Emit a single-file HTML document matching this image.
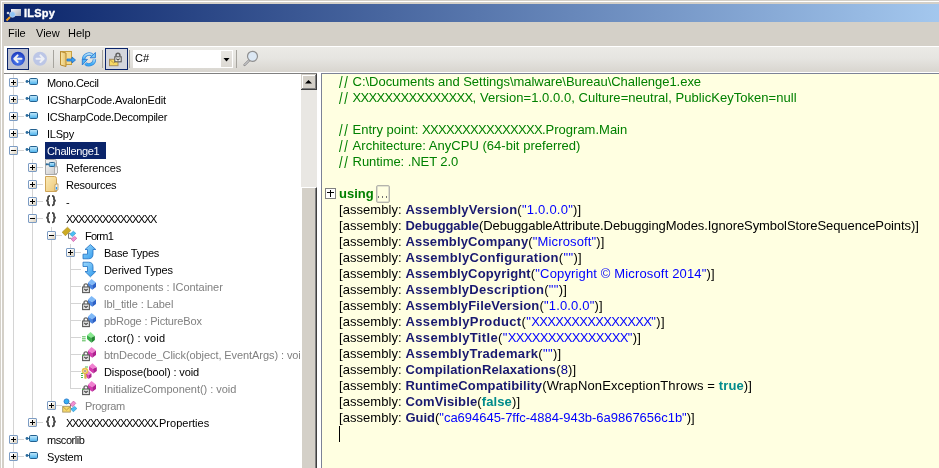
<!DOCTYPE html><html><head><meta charset="utf-8"><style>
*{margin:0;padding:0;box-sizing:border-box}
html,body{width:939px;height:468px;overflow:hidden;background:#D4D0C8;font-family:"Liberation Sans",sans-serif}
.a{position:absolute}
.t{will-change:transform;position:absolute;white-space:pre;line-height:17px;font-size:11px}
.c{will-change:transform;position:absolute;white-space:pre;line-height:16px;font-size:13px;left:339px;color:#000}
.g{color:#008000}
.k{color:#008000;font-weight:bold}
.n{color:#191970;font-weight:bold}
.s{color:#0000FF}
.v{color:#008B8B;font-weight:bold}
.d{color:#00008B}
.x{letter-spacing:-0.67px}
.x2{letter-spacing:-1.34px}
.sep{position:absolute;width:1px;background:#A6A49E}
</style></head><body><div class="a" style="left:1px;top:1px;width:938px;height:467px;border-left:1px solid #fff;border-top:1px solid #fff"></div>
<div class="a" style="left:4px;top:4px;width:935px;height:18px;background:linear-gradient(90deg,#0A246A 0px,#A6CAF0 951px)"></div>
<svg class="a" style="left:5px;top:5px" width="17" height="17" viewBox="0 0 17 17">
<defs><linearGradient id="tg" x1="0" y1="0" x2="1" y2="1"><stop offset="0" stop-color="#f4f4f6"/><stop offset="1" stop-color="#a8aeb8"/></linearGradient></defs>
<rect x="6" y="4" width="10" height="7" fill="url(#tg)"/>
<circle cx="3" cy="8" r="1.3" fill="#d0d4dc"/>
<circle cx="7.5" cy="9.5" r="2.8" fill="#8cc4f4" stroke="#c4d4ec" stroke-width="0.8"/>
<path d="M1.5 15.5 L5 12" stroke="#f0a020" stroke-width="2"/>
</svg>
<div class="t" style="left:24px;top:4px;line-height:18px;font-weight:bold;color:#fff;-webkit-text-stroke:0.35px #fff;letter-spacing:0.25px">ILSpy</div>
<div class="t" style="left:8px;top:25px;color:#000">File</div>
<div class="t" style="left:36px;top:25px;color:#000">View</div>
<div class="t" style="left:68px;top:25px;color:#000">Help</div>
<div class="a" style="left:4px;top:46px;width:935px;height:26px;border-top:1px solid #fff;border-left:1px solid #fff;background:linear-gradient(#EBEAE6 0%,#E6E5E1 45%,#D8D5CF 100%)"></div>
<div class="a" style="left:4px;top:72px;width:935px;height:1px;background:#fff"></div>
<div class="a" style="left:4px;top:46px;width:3px;height:27px;background:#fff"></div>
<div class="a" style="left:4px;top:46px;width:26px;height:2px;background:#fff"></div>
<div class="a" style="left:4px;top:70px;width:26px;height:2px;background:linear-gradient(90deg,#fff,#F4F2EA 80%,#E2DFD8)"></div>
<div class="a" style="left:7px;top:48px;width:22px;height:22px;border:1px solid #0A246A;background:#B9BED0"></div>
<div class="a" style="left:105px;top:48px;width:23px;height:22px;border:1px solid #0A246A;background:#D3D5DC"></div>
<svg class="a" style="left:10px;top:51px" width="16" height="16" viewBox="0 0 16 16">
<defs><radialGradient id="bk" cx="0.5" cy="0.65" r="0.6"><stop offset="0" stop-color="#5A8CF8"/><stop offset="1" stop-color="#1D3CC0"/></radialGradient></defs>
<circle cx="8" cy="7.7" r="7" fill="url(#bk)"/>
<path d="M4.3 7.7 L7.6 4.4 M4.3 7.7 L7.6 11 M4.6 7.7 L11.5 7.7" stroke="#F2F2F2" stroke-width="2" stroke-linecap="round" fill="none"/>
</svg>
<svg class="a" style="left:32px;top:51px" width="16" height="16" viewBox="0 0 16 16">
<circle cx="8" cy="7.7" r="7" fill="#BCC6E6"/>
<path d="M11.7 7.7 L8.4 4.4 M11.7 7.7 L8.4 11 M11.4 7.7 L4.5 7.7" stroke="#EEF0F6" stroke-width="2" stroke-linecap="round" fill="none"/>
</svg>
<div class="sep" style="left:53px;top:50px;height:18px"></div>
<svg class="a" style="left:59px;top:50px" width="18" height="18" viewBox="0 0 18 18">
<defs><linearGradient id="fo" x1="0" y1="0" x2="1" y2="0"><stop offset="0" stop-color="#F8E6A8"/><stop offset="1" stop-color="#E8C46C"/></linearGradient></defs>
<rect x="1.5" y="1.5" width="11" height="13" fill="#F4DA90" stroke="#C8A040" stroke-width="1"/>
<path d="M1.5 1.5 L7 3 L7 16.5 L1.5 15 Z" fill="url(#fo)" stroke="#B88A30" stroke-width="1"/>
<path d="M8 9 L13 9 L13 7 L16.5 10 L13 13 L13 11 L8 11 Z" fill="#3AA0F0" stroke="#1C6CC8" stroke-width="0.8"/>
</svg>
<svg class="a" style="left:81px;top:51px" width="16" height="16" viewBox="0 0 16 16">
<defs><linearGradient id="rf" x1="0" y1="0" x2="0" y2="1"><stop offset="0" stop-color="#B4E0FA"/><stop offset="1" stop-color="#30A8F6"/></linearGradient></defs>
<path d="M2.6 8.6 A5.4 5.4 0 0 1 11.8 4.6" stroke="#3C8CDC" stroke-width="3.4" fill="none"/>
<path d="M13.4 8.2 A5.4 5.4 0 0 1 4.4 12.4" stroke="#3C8CDC" stroke-width="3.4" fill="none"/>
<path d="M2.6 8.6 A5.4 5.4 0 0 1 11.8 4.6" stroke="url(#rf)" stroke-width="1.8" fill="none"/>
<path d="M13.4 8.2 A5.4 5.4 0 0 1 4.4 12.4" stroke="url(#rf)" stroke-width="1.8" fill="none"/>
<path d="M14.4 1.5 L14.4 6.8 L9.1 6.8 Z" fill="#7ACAF8" stroke="#2A78D0" stroke-width="0.9" stroke-linejoin="round"/>
<path d="M1.3 8.4 L6.5 8.4 L1.3 14 Z" fill="#50B4F6" stroke="#2A78D0" stroke-width="0.9" stroke-linejoin="round"/>
</svg>
<div class="sep" style="left:102px;top:50px;height:18px"></div>
<svg class="a" style="left:108px;top:51px" width="16" height="16" viewBox="0 0 16 16">
<rect x="1.5" y="8.3" width="8.5" height="6.4" fill="#F6D865" stroke="#A89060" stroke-width="1"/>
<path d="M1.8 8.6 L5.7 12 L9.7 8.6" stroke="#B89440" stroke-width="0.9" fill="none"/>
<path d="M8 5.5 L8 4.2 A1.95 1.95 0 0 1 11.9 4.2 L11.9 5.5" stroke="#606060" stroke-width="1.5" fill="none"/>
<rect x="6.8" y="5.8" width="6.4" height="5" fill="#EEEEEE" stroke="#585858" stroke-width="1.1"/>
<path d="M8.3 7.6 L10 9 L11.7 7.6" stroke="#505050" stroke-width="1.2" fill="none"/>
</svg>
<div class="sep" style="left:129px;top:50px;height:18px"></div>
<div class="a" style="left:133px;top:50px;width:100px;height:18px;background:#fff"></div>
<div class="a" style="left:221px;top:51px;width:11px;height:16px;background:linear-gradient(#E8E6E2,#DCD9D3)"></div>
<svg class="a" style="left:223px;top:58px" width="7" height="4" viewBox="0 0 7 4"><path d="M0.5 0 L6.5 0 L3.5 3.5 Z" fill="#000"/></svg>
<div class="t" style="left:135px;top:50px;color:#000">C#</div>
<div class="sep" style="left:236px;top:50px;height:18px"></div>
<svg class="a" style="left:242px;top:50px" width="17" height="17" viewBox="0 0 17 17">
<path d="M2.5 15 L7.5 10" stroke="#888" stroke-width="2.4" stroke-linecap="round"/>
<path d="M2.5 15 L7.5 10" stroke="#e8e8ee" stroke-width="1" stroke-linecap="round"/>
<circle cx="10.5" cy="6.3" r="5" fill="#DCE8F4" stroke="#909090" stroke-width="1.2"/>
</svg>
<div class="a" style="left:4px;top:73px;width:313px;height:1px;background:#808080"></div>
<div class="a" style="left:4px;top:74px;width:297px;height:394px;background:#fff;overflow:hidden">
<svg width="0" height="0" style="position:absolute"><defs>
<linearGradient id="ga" x1="0" y1="0" x2="0" y2="1"><stop offset="0" stop-color="#C8ECFC"/><stop offset="1" stop-color="#48B0EC"/></linearGradient>
<linearGradient id="gg" x1="0" y1="0" x2="1" y2="1"><stop offset="0" stop-color="#F8F8F8"/><stop offset="1" stop-color="#C8C8C8"/></linearGradient>
<linearGradient id="gf" x1="0" y1="0" x2="1" y2="1"><stop offset="0" stop-color="#FBEBB8"/><stop offset="1" stop-color="#EDC878"/></linearGradient>
<linearGradient id="gb" x1="0" y1="0" x2="1" y2="1"><stop offset="0" stop-color="#9CD8FC"/><stop offset="1" stop-color="#2C98EC"/></linearGradient>
</defs></svg>
<div class="a" style="left:9px;top:0px;width:1px;height:394px;background:#D4D4D4"></div>
<div class="a" style="left:28px;top:85px;width:1px;height:264px;background:#D4D4D4"></div>
<div class="a" style="left:47px;top:153px;width:1px;height:179px;background:#D4D4D4"></div>
<div class="a" style="left:66px;top:170px;width:1px;height:145px;background:#D4D4D4"></div>
<div class="a" style="left:14px;top:8px;width:6px;height:1px;background:#D4D4D4"></div>
<div class="a" style="left:14px;top:25px;width:6px;height:1px;background:#D4D4D4"></div>
<div class="a" style="left:14px;top:42px;width:6px;height:1px;background:#D4D4D4"></div>
<div class="a" style="left:14px;top:59px;width:6px;height:1px;background:#D4D4D4"></div>
<div class="a" style="left:14px;top:76px;width:6px;height:1px;background:#D4D4D4"></div>
<div class="a" style="left:33px;top:93px;width:6px;height:1px;background:#D4D4D4"></div>
<div class="a" style="left:33px;top:110px;width:6px;height:1px;background:#D4D4D4"></div>
<div class="a" style="left:33px;top:127px;width:6px;height:1px;background:#D4D4D4"></div>
<div class="a" style="left:33px;top:144px;width:6px;height:1px;background:#D4D4D4"></div>
<div class="a" style="left:52px;top:161px;width:6px;height:1px;background:#D4D4D4"></div>
<div class="a" style="left:71px;top:178px;width:6px;height:1px;background:#D4D4D4"></div>
<div class="a" style="left:66px;top:195px;width:11px;height:1px;background:#D4D4D4"></div>
<div class="a" style="left:66px;top:212px;width:11px;height:1px;background:#D4D4D4"></div>
<div class="a" style="left:66px;top:229px;width:11px;height:1px;background:#D4D4D4"></div>
<div class="a" style="left:66px;top:246px;width:11px;height:1px;background:#D4D4D4"></div>
<div class="a" style="left:66px;top:263px;width:11px;height:1px;background:#D4D4D4"></div>
<div class="a" style="left:66px;top:280px;width:11px;height:1px;background:#D4D4D4"></div>
<div class="a" style="left:66px;top:297px;width:11px;height:1px;background:#D4D4D4"></div>
<div class="a" style="left:66px;top:314px;width:11px;height:1px;background:#D4D4D4"></div>
<div class="a" style="left:52px;top:331px;width:6px;height:1px;background:#D4D4D4"></div>
<div class="a" style="left:33px;top:348px;width:6px;height:1px;background:#D4D4D4"></div>
<div class="a" style="left:14px;top:365px;width:6px;height:1px;background:#D4D4D4"></div>
<div class="a" style="left:14px;top:382px;width:6px;height:1px;background:#D4D4D4"></div>
<div class="a" style="left:5px;top:4px;width:9px;height:9px;border:1px solid #7C9CC4;border-radius:1px;background:linear-gradient(135deg,#FFFFFF 20%,#D8CFBC)"></div>
<div class="a" style="left:7px;top:8px;width:5px;height:1px;background:#000"></div>
<div class="a" style="left:9px;top:6px;width:1px;height:5px;background:#000"></div>
<svg class="a" style="left:21px;top:0px;overflow:visible" width="16" height="17" viewBox="0 0 16 17"><circle cx="2" cy="7.5" r="1.4" fill="#2A6A9C"/><path d="M2 7.5 L4 7.5" stroke="#2A6A9C" stroke-width="1"/>
<rect x="4.5" y="4.5" width="8" height="6" rx="1.2" fill="url(#ga)" stroke="#23608F" stroke-width="1"/></svg>
<div class="t" style="left:43px;top:1px;color:#000;letter-spacing:-0.333px">Mono.Cecil</div>
<div class="a" style="left:5px;top:21px;width:9px;height:9px;border:1px solid #7C9CC4;border-radius:1px;background:linear-gradient(135deg,#FFFFFF 20%,#D8CFBC)"></div>
<div class="a" style="left:7px;top:25px;width:5px;height:1px;background:#000"></div>
<div class="a" style="left:9px;top:23px;width:1px;height:5px;background:#000"></div>
<svg class="a" style="left:21px;top:17px;overflow:visible" width="16" height="17" viewBox="0 0 16 17"><circle cx="2" cy="7.5" r="1.4" fill="#2A6A9C"/><path d="M2 7.5 L4 7.5" stroke="#2A6A9C" stroke-width="1"/>
<rect x="4.5" y="4.5" width="8" height="6" rx="1.2" fill="url(#ga)" stroke="#23608F" stroke-width="1"/></svg>
<div class="t" style="left:43px;top:18px;color:#000;letter-spacing:-0.143px">ICSharpCode.AvalonEdit</div>
<div class="a" style="left:5px;top:38px;width:9px;height:9px;border:1px solid #7C9CC4;border-radius:1px;background:linear-gradient(135deg,#FFFFFF 20%,#D8CFBC)"></div>
<div class="a" style="left:7px;top:42px;width:5px;height:1px;background:#000"></div>
<div class="a" style="left:9px;top:40px;width:1px;height:5px;background:#000"></div>
<svg class="a" style="left:21px;top:34px;overflow:visible" width="16" height="17" viewBox="0 0 16 17"><circle cx="2" cy="7.5" r="1.4" fill="#2A6A9C"/><path d="M2 7.5 L4 7.5" stroke="#2A6A9C" stroke-width="1"/>
<rect x="4.5" y="4.5" width="8" height="6" rx="1.2" fill="url(#ga)" stroke="#23608F" stroke-width="1"/></svg>
<div class="t" style="left:43px;top:35px;color:#000;letter-spacing:-0.238px">ICSharpCode.Decompiler</div>
<div class="a" style="left:5px;top:55px;width:9px;height:9px;border:1px solid #7C9CC4;border-radius:1px;background:linear-gradient(135deg,#FFFFFF 20%,#D8CFBC)"></div>
<div class="a" style="left:7px;top:59px;width:5px;height:1px;background:#000"></div>
<div class="a" style="left:9px;top:57px;width:1px;height:5px;background:#000"></div>
<svg class="a" style="left:21px;top:51px;overflow:visible" width="16" height="17" viewBox="0 0 16 17"><circle cx="2" cy="7.5" r="1.4" fill="#2A6A9C"/><path d="M2 7.5 L4 7.5" stroke="#2A6A9C" stroke-width="1"/>
<rect x="4.5" y="4.5" width="8" height="6" rx="1.2" fill="url(#ga)" stroke="#23608F" stroke-width="1"/></svg>
<div class="t" style="left:43px;top:52px;color:#000;letter-spacing:-0.25px">ILSpy</div>
<div class="a" style="left:5px;top:72px;width:9px;height:9px;border:1px solid #7C9CC4;border-radius:1px;background:linear-gradient(135deg,#FFFFFF 20%,#D8CFBC)"></div>
<div class="a" style="left:7px;top:76px;width:5px;height:1px;background:#000"></div>
<svg class="a" style="left:21px;top:68px;overflow:visible" width="16" height="17" viewBox="0 0 16 17"><circle cx="2" cy="7.5" r="1.4" fill="#2A6A9C"/><path d="M2 7.5 L4 7.5" stroke="#2A6A9C" stroke-width="1"/>
<rect x="4.5" y="4.5" width="8" height="6" rx="1.2" fill="url(#ga)" stroke="#23608F" stroke-width="1"/></svg>
<div class="a" style="left:41px;top:68px;width:61px;height:17px;background:#0A246A"></div>
<div class="t" style="left:43px;top:69px;color:#fff;letter-spacing:-0.333px">Challenge1</div>
<div class="a" style="left:24px;top:89px;width:9px;height:9px;border:1px solid #7C9CC4;border-radius:1px;background:linear-gradient(135deg,#FFFFFF 20%,#D8CFBC)"></div>
<div class="a" style="left:26px;top:93px;width:5px;height:1px;background:#000"></div>
<div class="a" style="left:28px;top:91px;width:1px;height:5px;background:#000"></div>
<svg class="a" style="left:40px;top:85px;overflow:visible" width="16" height="17" viewBox="0 0 16 17"><path d="M1.5 0.5 L10.5 0.5 Q12.5 0.5 12.5 2.5 L12.5 15.5 L1.5 15.5 Z" fill="url(#gg)" stroke="#A8A8A8" stroke-width="1"/>
<path d="M10.5 8 L13.5 7.5 L13.5 14 L10.5 15.5 Z" fill="#F0F0F0" stroke="#A0A0A0" stroke-width="0.8"/>
<circle cx="2.8" cy="5.3" r="1.1" fill="#2A6A9C"/><path d="M2.8 5.3 L5 5.3" stroke="#2A6A9C"/>
<rect x="5.2" y="3.5" width="5.6" height="4" rx="1" fill="url(#ga)" stroke="#23608F" stroke-width="1"/></svg>
<div class="t" style="left:62px;top:86px;color:#000;letter-spacing:-0.111px">References</div>
<div class="a" style="left:24px;top:106px;width:9px;height:9px;border:1px solid #7C9CC4;border-radius:1px;background:linear-gradient(135deg,#FFFFFF 20%,#D8CFBC)"></div>
<div class="a" style="left:26px;top:110px;width:5px;height:1px;background:#000"></div>
<div class="a" style="left:28px;top:108px;width:1px;height:5px;background:#000"></div>
<svg class="a" style="left:40px;top:102px;overflow:visible" width="16" height="17" viewBox="0 0 16 17"><path d="M1.5 0.5 L10.5 0.5 Q12.5 0.5 12.5 2.5 L12.5 15.5 L1.5 15.5 Z" fill="url(#gf)" stroke="#CFA557" stroke-width="1"/>
<path d="M11 8.5 L14 7.8 L14 14 L11 15 Z" fill="#F4F4F4" stroke="#B89858" stroke-width="0.8"/><path d="M12.5 11 L12.5 13.5" stroke="#2898F0" stroke-width="1.3"/></svg>
<div class="t" style="left:62px;top:103px;color:#000;letter-spacing:-0.25px">Resources</div>
<div class="a" style="left:24px;top:123px;width:9px;height:9px;border:1px solid #7C9CC4;border-radius:1px;background:linear-gradient(135deg,#FFFFFF 20%,#D8CFBC)"></div>
<div class="a" style="left:26px;top:127px;width:5px;height:1px;background:#000"></div>
<div class="a" style="left:28px;top:125px;width:1px;height:5px;background:#000"></div>
<svg class="a" style="left:40px;top:119px;overflow:visible" width="16" height="17" viewBox="0 0 16 17"><path d="M6 2.8 Q4 2.8 4 4.8 L4 6.5 Q4 7.5 2.2 7.6 Q4 7.7 4 8.7 L4 10.5 Q4 12.4 6 12.4 M8 2.8 Q10 2.8 10 4.8 L10 6.5 Q10 7.5 11.8 7.6 Q10 7.7 10 8.7 L10 10.5 Q10 12.4 8 12.4" stroke="#444" stroke-width="1.8" fill="none"/></svg>
<div class="t" style="left:62px;top:120px;color:#000;letter-spacing:0px">-</div>
<div class="a" style="left:24px;top:140px;width:9px;height:9px;border:1px solid #7C9CC4;border-radius:1px;background:linear-gradient(135deg,#FFFFFF 20%,#D8CFBC)"></div>
<div class="a" style="left:26px;top:144px;width:5px;height:1px;background:#000"></div>
<svg class="a" style="left:40px;top:136px;overflow:visible" width="16" height="17" viewBox="0 0 16 17"><path d="M6 2.8 Q4 2.8 4 4.8 L4 6.5 Q4 7.5 2.2 7.6 Q4 7.7 4 8.7 L4 10.5 Q4 12.4 6 12.4 M8 2.8 Q10 2.8 10 4.8 L10 6.5 Q10 7.5 11.8 7.6 Q10 7.7 10 8.7 L10 10.5 Q10 12.4 8 12.4" stroke="#444" stroke-width="1.8" fill="none"/></svg>
<div class="t" style="left:62px;top:137px;color:#000;letter-spacing:0px"><span class="x2">XXXXXXXXXXXXXXX</span></div>
<div class="a" style="left:43px;top:157px;width:9px;height:9px;border:1px solid #7C9CC4;border-radius:1px;background:linear-gradient(135deg,#FFFFFF 20%,#D8CFBC)"></div>
<div class="a" style="left:45px;top:161px;width:5px;height:1px;background:#000"></div>
<svg class="a" style="left:59px;top:153px;overflow:visible" width="16" height="17" viewBox="0 0 16 17"><path d="M4.5 0.2 L7.8 3.4 L2.4 8.8 L-0.8 5.2 Z" fill="#CDAA22" stroke="#A08418" stroke-width="0.6"/>
<path d="M5.5 6.3 L5.5 11.3 L8.5 11.3 M5.5 6.3 L7.5 6.3" stroke="#7A7A7A" stroke-width="1" fill="none"/>
<path d="M10.3 4.2 L12.8 6.3 L9.2 9.6 L7 7.3 Z" fill="#48C0F4" stroke="#1E88C8" stroke-width="0.6"/>
<path d="M11.5 9.2 L13.8 11.3 L10.3 14.6 L8.2 12.1 Z" fill="#F090D0" stroke="#C04898" stroke-width="0.6"/></svg>
<div class="t" style="left:81px;top:154px;color:#000;letter-spacing:-0.75px">Form1</div>
<div class="a" style="left:62px;top:174px;width:9px;height:9px;border:1px solid #7C9CC4;border-radius:1px;background:linear-gradient(135deg,#FFFFFF 20%,#D8CFBC)"></div>
<div class="a" style="left:64px;top:178px;width:5px;height:1px;background:#000"></div>
<div class="a" style="left:66px;top:176px;width:1px;height:5px;background:#000"></div>
<svg class="a" style="left:78px;top:170px;overflow:visible" width="16" height="17" viewBox="0 0 16 17"><path d="M8.4 0.5 L13.8 5.5 L11 5.5 L11 10 Q11 14.8 6.5 14.8 L1 14.8 L1 10.2 L5.5 10.2 L5.5 5.5 L3 5.5 Z" fill="url(#gb)" stroke="#2070C0" stroke-width="0.8"/></svg>
<div class="t" style="left:100px;top:171px;color:#000;letter-spacing:-0.222px">Base Types</div>
<svg class="a" style="left:78px;top:187px;overflow:visible" width="16" height="17" viewBox="0 0 16 17"><path d="M1 1.2 L6.5 1.2 Q11 1.2 11 5.7 L11 10.5 L13.8 10.5 L8.4 15.8 L3 10.5 L5.5 10.5 L5.5 5.5 L1 5.5 Z" fill="url(#gb)" stroke="#2070C0" stroke-width="0.8"/></svg>
<div class="t" style="left:100px;top:188px;color:#000;letter-spacing:-0.083px">Derived Types</div>
<svg class="a" style="left:78px;top:204px;overflow:visible" width="16" height="17" viewBox="0 0 16 17"><polygon points="6,4.4 9.5,1 14,4.6 10.2,7.2" fill="#80BAF8"/><polygon points="6,4.4 10.2,7.2 10.3,11.8 6,8.8" fill="#4A88E4"/><polygon points="10.2,7.2 14,4.6 14,9 10.3,11.8" fill="#2C62C8"/><path d="M2 9 L2 7.8 A1.9 1.9 0 0 1 5.8 7.8 L5.8 9" stroke="#6A6A6A" stroke-width="1.4" fill="none"/>
<rect x="0.6" y="9" width="6.8" height="5.6" fill="#E6E6E6" stroke="#5A5A5A" stroke-width="1.1"/>
<path d="M2.3 11 L4 12.5 L5.7 11" stroke="#505050" stroke-width="1.2" fill="none"/></svg>
<div class="t" style="left:100px;top:205px;color:#808080;letter-spacing:-0.045px">components : IContainer</div>
<svg class="a" style="left:78px;top:221px;overflow:visible" width="16" height="17" viewBox="0 0 16 17"><polygon points="6,4.4 9.5,1 14,4.6 10.2,7.2" fill="#80BAF8"/><polygon points="6,4.4 10.2,7.2 10.3,11.8 6,8.8" fill="#4A88E4"/><polygon points="10.2,7.2 14,4.6 14,9 10.3,11.8" fill="#2C62C8"/><path d="M2 9 L2 7.8 A1.9 1.9 0 0 1 5.8 7.8 L5.8 9" stroke="#6A6A6A" stroke-width="1.4" fill="none"/>
<rect x="0.6" y="9" width="6.8" height="5.6" fill="#E6E6E6" stroke="#5A5A5A" stroke-width="1.1"/>
<path d="M2.3 11 L4 12.5 L5.7 11" stroke="#505050" stroke-width="1.2" fill="none"/></svg>
<div class="t" style="left:100px;top:222px;color:#808080;letter-spacing:-0.062px">lbl_title : Label</div>
<svg class="a" style="left:78px;top:238px;overflow:visible" width="16" height="17" viewBox="0 0 16 17"><polygon points="6,4.4 9.5,1 14,4.6 10.2,7.2" fill="#80BAF8"/><polygon points="6,4.4 10.2,7.2 10.3,11.8 6,8.8" fill="#4A88E4"/><polygon points="10.2,7.2 14,4.6 14,9 10.3,11.8" fill="#2C62C8"/><path d="M2 9 L2 7.8 A1.9 1.9 0 0 1 5.8 7.8 L5.8 9" stroke="#6A6A6A" stroke-width="1.4" fill="none"/>
<rect x="0.6" y="9" width="6.8" height="5.6" fill="#E6E6E6" stroke="#5A5A5A" stroke-width="1.1"/>
<path d="M2.3 11 L4 12.5 L5.7 11" stroke="#505050" stroke-width="1.2" fill="none"/></svg>
<div class="t" style="left:100px;top:239px;color:#808080;letter-spacing:-0.167px">pbRoge : PictureBox</div>
<svg class="a" style="left:78px;top:255px;overflow:visible" width="16" height="17" viewBox="0 0 16 17"><polygon points="5,6.2 8.5,3.1 12.9,7.1 9.2,8.8" fill="#88E890"/><polygon points="5,6.2 9.2,8.8 9.5,13.7 5,10" fill="#38B048"/><polygon points="9.2,8.8 12.9,7.1 12.9,11 9.5,13.7" fill="#208830"/><path d="M0 7.8 L3.7 7.8 M0 9.8 L3.7 9.8 M0 11.8 L3.7 11.8" stroke="#50B850" stroke-width="1"/></svg>
<div class="t" style="left:100px;top:256px;color:#000;letter-spacing:0.231px">.ctor() : void</div>
<svg class="a" style="left:78px;top:272px;overflow:visible" width="16" height="17" viewBox="0 0 16 17"><polygon points="6,4.4 9.5,1 14,4.6 10.2,7.2" fill="#F080D0"/><polygon points="6,4.4 10.2,7.2 10.3,11.8 6,8.8" fill="#D838B0"/><polygon points="10.2,7.2 14,4.6 14,9 10.3,11.8" fill="#B02090"/><path d="M2 9 L2 7.8 A1.9 1.9 0 0 1 5.8 7.8 L5.8 9" stroke="#6A6A6A" stroke-width="1.4" fill="none"/>
<rect x="0.6" y="9" width="6.8" height="5.6" fill="#E6E6E6" stroke="#5A5A5A" stroke-width="1.1"/>
<path d="M2.3 11 L4 12.5 L5.7 11" stroke="#505050" stroke-width="1.2" fill="none"/><path d="M0 9.5 L2 9.5" stroke="#50B850"/></svg>
<div class="t" style="left:100px;top:273px;color:#808080;letter-spacing:-0.08px">btnDecode_Click(object, EventArgs) : void</div>
<svg class="a" style="left:78px;top:289px;overflow:visible" width="16" height="17" viewBox="0 0 16 17"><polygon points="7,3.2 10.4,0.2 14.8,4.2 11,5.8" fill="#F080D0"/><polygon points="7,3.2 11,5.8 11.4,10.5 7,7" fill="#D838B0"/><polygon points="11,5.8 14.8,4.2 14.8,8 11.4,10.5" fill="#B02090"/><polygon points="3.5,10 6.4,7.8 9.5,10.5 6.5,12" fill="#F080D0"/><polygon points="3.5,10 6.5,12 6.5,16 3.5,13.5" fill="#D838B0"/><polygon points="6.5,12 9.5,10.5 9.5,14 6.5,16" fill="#B02090"/><circle cx="3" cy="8" r="2.4" fill="none" stroke="#E8C050" stroke-width="1.8"/><circle cx="3" cy="8" r="0.8" fill="#603010"/>
<path d="M3 10 L3 15.5 M3 13 L5 13 M3 15 L4.5 15" stroke="#D8B048" stroke-width="1.4"/>
<path d="M-1 10.5 L1 10.5 M-1 12.5 L1 12.5 M-1 14.5 L1 14.5 M3 4 L6 4" stroke="#50B850" stroke-width="1"/></svg>
<div class="t" style="left:100px;top:290px;color:#000;letter-spacing:-0.105px">Dispose(bool) : void</div>
<svg class="a" style="left:78px;top:306px;overflow:visible" width="16" height="17" viewBox="0 0 16 17"><polygon points="6,4.4 9.5,1 14,4.6 10.2,7.2" fill="#F080D0"/><polygon points="6,4.4 10.2,7.2 10.3,11.8 6,8.8" fill="#D838B0"/><polygon points="10.2,7.2 14,4.6 14,9 10.3,11.8" fill="#B02090"/><path d="M2 9 L2 7.8 A1.9 1.9 0 0 1 5.8 7.8 L5.8 9" stroke="#6A6A6A" stroke-width="1.4" fill="none"/>
<rect x="0.6" y="9" width="6.8" height="5.6" fill="#E6E6E6" stroke="#5A5A5A" stroke-width="1.1"/>
<path d="M2.3 11 L4 12.5 L5.7 11" stroke="#505050" stroke-width="1.2" fill="none"/><path d="M0 9.5 L2 9.5" stroke="#50B850"/></svg>
<div class="t" style="left:100px;top:307px;color:#808080;letter-spacing:-0.037px">InitializeComponent() : void</div>
<div class="a" style="left:43px;top:327px;width:9px;height:9px;border:1px solid #7C9CC4;border-radius:1px;background:linear-gradient(135deg,#FFFFFF 20%,#D8CFBC)"></div>
<div class="a" style="left:45px;top:331px;width:5px;height:1px;background:#000"></div>
<div class="a" style="left:47px;top:329px;width:1px;height:5px;background:#000"></div>
<svg class="a" style="left:59px;top:323px;overflow:visible" width="16" height="17" viewBox="0 0 16 17"><circle cx="3.5" cy="4.4" r="2.5" fill="#38B0F0" stroke="#1E70C8" stroke-width="0.8"/>
<path d="M5.5 6 L7.5 7 L7.5 11 L9 12" stroke="#707070" stroke-width="1" fill="none"/>
<path d="M10.5 4 L12.8 6.3 L9.5 9.8 L7.2 7.5 Z" fill="#F090D0" stroke="#C04898" stroke-width="0.6"/>
<path d="M11.4 9.2 L13.9 11.5 L10.3 14.8 L8 12.3 Z" fill="#48C0F4" stroke="#1E88C8" stroke-width="0.6"/>
<rect x="-0.3" y="9.3" width="7.6" height="5.8" fill="#F6D868" stroke="#A89868" stroke-width="0.9"/><path d="M0 9.8 L3.5 13 L7 9.8" stroke="#B89A40" stroke-width="0.9" fill="none"/></svg>
<div class="t" style="left:81px;top:324px;color:#808080;letter-spacing:-0.333px">Program</div>
<div class="a" style="left:24px;top:344px;width:9px;height:9px;border:1px solid #7C9CC4;border-radius:1px;background:linear-gradient(135deg,#FFFFFF 20%,#D8CFBC)"></div>
<div class="a" style="left:26px;top:348px;width:5px;height:1px;background:#000"></div>
<div class="a" style="left:28px;top:346px;width:1px;height:5px;background:#000"></div>
<svg class="a" style="left:40px;top:340px;overflow:visible" width="16" height="17" viewBox="0 0 16 17"><path d="M6 2.8 Q4 2.8 4 4.8 L4 6.5 Q4 7.5 2.2 7.6 Q4 7.7 4 8.7 L4 10.5 Q4 12.4 6 12.4 M8 2.8 Q10 2.8 10 4.8 L10 6.5 Q10 7.5 11.8 7.6 Q10 7.7 10 8.7 L10 10.5 Q10 12.4 8 12.4" stroke="#444" stroke-width="1.8" fill="none"/></svg>
<div class="t" style="left:62px;top:341px;color:#000;letter-spacing:0.0px"><span class="x2">XXXXXXXXXXXXXXX</span>.Properties</div>
<div class="a" style="left:5px;top:361px;width:9px;height:9px;border:1px solid #7C9CC4;border-radius:1px;background:linear-gradient(135deg,#FFFFFF 20%,#D8CFBC)"></div>
<div class="a" style="left:7px;top:365px;width:5px;height:1px;background:#000"></div>
<div class="a" style="left:9px;top:363px;width:1px;height:5px;background:#000"></div>
<svg class="a" style="left:21px;top:357px;overflow:visible" width="16" height="17" viewBox="0 0 16 17"><circle cx="2" cy="7.5" r="1.4" fill="#2A6A9C"/><path d="M2 7.5 L4 7.5" stroke="#2A6A9C" stroke-width="1"/>
<rect x="4.5" y="4.5" width="8" height="6" rx="1.2" fill="url(#ga)" stroke="#23608F" stroke-width="1"/></svg>
<div class="t" style="left:43px;top:358px;color:#000;letter-spacing:-0.429px">mscorlib</div>
<div class="a" style="left:5px;top:378px;width:9px;height:9px;border:1px solid #7C9CC4;border-radius:1px;background:linear-gradient(135deg,#FFFFFF 20%,#D8CFBC)"></div>
<div class="a" style="left:7px;top:382px;width:5px;height:1px;background:#000"></div>
<div class="a" style="left:9px;top:380px;width:1px;height:5px;background:#000"></div>
<svg class="a" style="left:21px;top:374px;overflow:visible" width="16" height="17" viewBox="0 0 16 17"><circle cx="2" cy="7.5" r="1.4" fill="#2A6A9C"/><path d="M2 7.5 L4 7.5" stroke="#2A6A9C" stroke-width="1"/>
<rect x="4.5" y="4.5" width="8" height="6" rx="1.2" fill="url(#ga)" stroke="#23608F" stroke-width="1"/></svg>
<div class="t" style="left:43px;top:375px;color:#000;letter-spacing:-0.2px">System</div>
</div>
<div class="a" style="left:301px;top:74px;width:16px;height:394px;background:#E9E7E3"></div>
<div class="a" style="left:301px;top:74px;width:16px;height:16px;background:#D4D0C8;box-shadow:inset -1px -1px 0 #404040,inset 1px 1px 0 #D4D0C8,inset -2px -2px 0 #808080,inset 2px 2px 0 #fff"></div>
<svg class="a" style="left:305px;top:79px" width="8" height="5" viewBox="0 0 8 5"><path d="M0 4.6 L7 4.6 L3.5 1 Z" fill="#000"/></svg>
<div class="a" style="left:301px;top:187px;width:16px;height:290px;background:#D4D0C8;border-top:1px solid #fff;border-left:1px solid #fff;border-right:1px solid #404040;box-shadow:inset -1px 0 0 #808080"></div>
<div class="a" style="left:317px;top:73px;width:4px;height:395px;background:#fff"></div>
<div class="a" style="left:321px;top:73px;width:618px;height:395px;background:#FFFFE1;border-left:1px solid #7C8296;border-top:1px solid #7C8296"></div>
<div class="c" style="top:74px;letter-spacing:-0.037px"><span class="g"><span style="display:inline-block;width:13.6px;letter-spacing:1.6px;transform:translateY(1px) scaleY(1.3)">//</span>C:\Documents and Settings\malware\Bureau\Challenge1.exe</span></div>
<div class="c" style="top:90px;letter-spacing:0.037px"><span class="g"><span style="display:inline-block;width:13.6px;letter-spacing:1.6px;transform:translateY(1px) scaleY(1.3)">//</span><span class="x">XXXXXXXXXXXXXXX</span>, Version=1.0.0.0, Culture=neutral, PublicKeyToken=null</span></div>
<div class="c" style="top:122px;letter-spacing:0.0px"><span class="g"><span style="display:inline-block;width:13.6px;letter-spacing:1.6px;transform:translateY(1px) scaleY(1.3)">//</span>Entry point: <span class="x">XXXXXXXXXXXXXXX</span>.Program.Main</span></div>
<div class="c" style="top:138px;letter-spacing:0.026px"><span class="g"><span style="display:inline-block;width:13.6px;letter-spacing:1.6px;transform:translateY(1px) scaleY(1.3)">//</span>Architecture: AnyCPU (64-bit preferred)</span></div>
<div class="c" style="top:154px;letter-spacing:-0.062px"><span class="g"><span style="display:inline-block;width:13.6px;letter-spacing:1.6px;transform:translateY(1px) scaleY(1.3)">//</span>Runtime: .NET 2.0</span></div>
<div class="a" style="left:325px;top:188px;width:11px;height:11px;border:1px solid #808080;background:#fff"></div>
<div class="a" style="left:327px;top:192px;width:7px;height:1px;background:#000"></div>
<div class="a" style="left:330px;top:190px;width:1px;height:7px;background:#000"></div>
<div class="c" style="left:339px;top:186px"><span class="k">using</span></div>
<div class="a" style="left:376px;top:185px;width:14px;height:18px;border:1px solid #B4B4AC;border-radius:2px;box-shadow:inset 0 0 0 0.6px #C8C8C0"></div>
<div class="a" style="left:378px;top:196px;width:1px;height:2px;background:#707070"></div>
<div class="a" style="left:382px;top:196px;width:1px;height:2px;background:#707070"></div>
<div class="a" style="left:386px;top:196px;width:1px;height:2px;background:#707070"></div>
<div class="c" style="top:202px;letter-spacing:0.231px"><span style="display:inline-block;width:66.5px;letter-spacing:0.05px">[assembly: </span><span class="n">AssemblyVersion</span>(<span class="s">&quot;1.0.0.0&quot;</span>)]</div>
<div class="c" style="top:218px;letter-spacing:-0.09px"><span style="display:inline-block;width:66.5px;letter-spacing:0.05px">[assembly: </span><span class="n">Debuggable</span>(DebuggableAttribute.DebuggingModes.IgnoreSymbolStoreSequencePoints)]</div>
<div class="c" style="top:234px;letter-spacing:0.143px"><span style="display:inline-block;width:66.5px;letter-spacing:0.05px">[assembly: </span><span class="n">AssemblyCompany</span>(<span class="s">&quot;Microsoft&quot;</span>)]</div>
<div class="c" style="top:250px;letter-spacing:0.32px"><span style="display:inline-block;width:66.5px;letter-spacing:0.05px">[assembly: </span><span class="n">AssemblyConfiguration</span>(<span class="s">&quot;&quot;</span>)]</div>
<div class="c" style="top:266px;letter-spacing:0.149px"><span style="display:inline-block;width:66.5px;letter-spacing:0.05px">[assembly: </span><span class="n">AssemblyCopyright</span>(<span class="s">&quot;Copyright © Microsoft 2014&quot;</span>)]</div>
<div class="c" style="top:282px;letter-spacing:0.304px"><span style="display:inline-block;width:66.5px;letter-spacing:0.05px">[assembly: </span><span class="n">AssemblyDescription</span>(<span class="s">&quot;&quot;</span>)]</div>
<div class="c" style="top:298px;letter-spacing:0.167px"><span style="display:inline-block;width:66.5px;letter-spacing:0.05px">[assembly: </span><span class="n">AssemblyFileVersion</span>(<span class="s">&quot;1.0.0.0&quot;</span>)]</div>
<div class="c" style="top:314px;letter-spacing:0.368px"><span style="display:inline-block;width:66.5px;letter-spacing:0.05px">[assembly: </span><span class="n">AssemblyProduct</span>(<span class="s">&quot;<span class="x">XXXXXXXXXXXXXXX</span>&quot;</span>)]</div>
<div class="c" style="top:330px;letter-spacing:0.353px"><span style="display:inline-block;width:66.5px;letter-spacing:0.05px">[assembly: </span><span class="n">AssemblyTitle</span>(<span class="s">&quot;<span class="x">XXXXXXXXXXXXXXX</span>&quot;</span>)]</div>
<div class="c" style="top:346px;letter-spacing:0.333px"><span style="display:inline-block;width:66.5px;letter-spacing:0.05px">[assembly: </span><span class="n">AssemblyTrademark</span>(<span class="s">&quot;&quot;</span>)]</div>
<div class="c" style="top:362px;letter-spacing:0.12px"><span style="display:inline-block;width:66.5px;letter-spacing:0.05px">[assembly: </span><span class="n">CompilationRelaxations</span>(<span class="d">8</span>)]</div>
<div class="c" style="top:378px;letter-spacing:0.118px"><span style="display:inline-block;width:66.5px;letter-spacing:0.05px">[assembly: </span><span class="n">RuntimeCompatibility</span>(WrapNonExceptionThrows = <span class="v">true</span>)]</div>
<div class="c" style="top:394px;letter-spacing:0.118px"><span style="display:inline-block;width:66.5px;letter-spacing:0.05px">[assembly: </span><span class="n">ComVisible</span>(<span class="v">false</span>)]</div>
<div class="c" style="top:410px;letter-spacing:-0.023px"><span style="display:inline-block;width:66.5px;letter-spacing:0.05px">[assembly: </span><span class="n">Guid</span>(<span class="s">&quot;ca694645-7ffc-4884-943b-6a9867656c1b&quot;</span>)]</div>
<div class="a" style="left:339px;top:426px;width:1px;height:16px;background:#000"></div></body></html>
